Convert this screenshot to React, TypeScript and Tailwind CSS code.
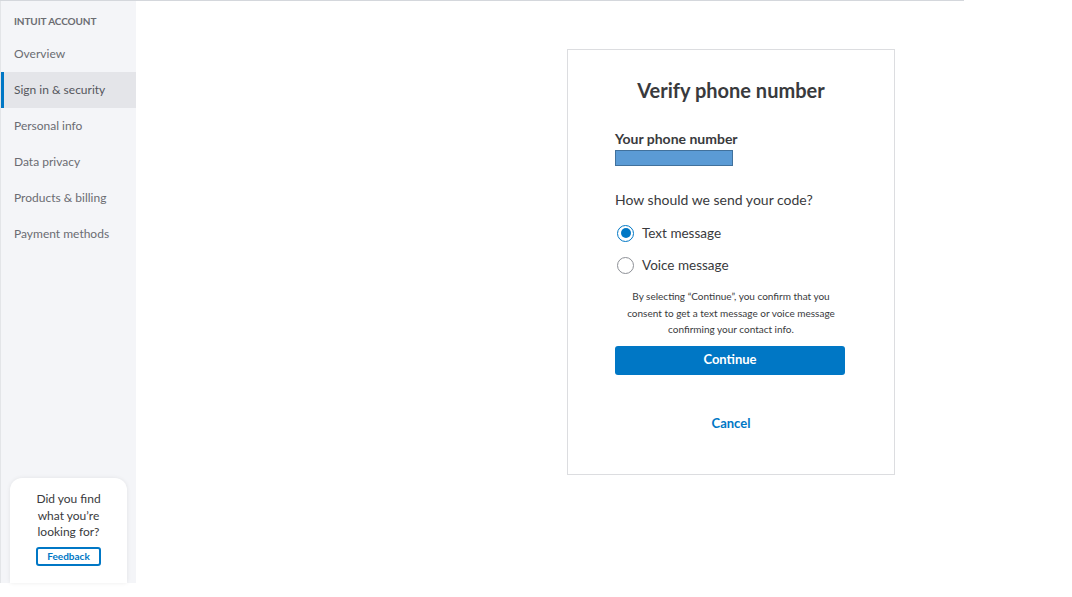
import React from "react";

const font = { fontFamily: "Lato, 'Open Sans', sans-serif" };

const items = ["Overview", "Sign in & security", "Personal info", "Data privacy", "Products & billing", "Payment methods"];

export default function App() {
  return (
    <div className="w-[1072px] h-[597px] bg-white" style={font}>
      <div className="w-[964px] border-t border-[#d4d7dc] flex">
        <aside className="w-[136px] h-[582px] bg-[#f4f5f8] border-l border-[#e3e5e8] flex flex-col shrink-0">
          <div className="pl-[13px] pt-[13px] h-[35px] text-[10px] font-bold text-[#6b6c72] tracking-[-0.1px]">INTUIT ACCOUNT</div>
          {items.map((it, i) => (
            <div
              key={it}
              className={
                i === 1
                  ? "h-[36px] flex items-center pl-[10px] text-[12px] text-[#55575d] bg-[#e4e5e9] border-l-[3px] border-[#0077c5]"
                  : "h-[36px] flex items-center pl-[13px] text-[12px] text-[#6b6c72]"
              }
            >
              {it}
            </div>
          ))}
          <div className="mt-auto mx-[9px] bg-white rounded-t-[12px] shadow-[0_0_4px_rgba(0,0,0,0.08)] h-[105px] flex flex-col items-center pt-[13px]">
            <div className="text-[12px] leading-[16.5px] text-[#393a3d] text-center">
              Did you find
              <br />
              what you’re
              <br />
              looking for?
            </div>
            <div className="mt-[6px] w-[65px] h-[19px] border-2 border-[#0077c5] rounded-[3px] flex items-center justify-center text-[10px] font-bold text-[#0077c5]">
              Feedback
            </div>
          </div>
        </aside>
        <main className="flex-1 pl-[431px] pt-[48px]">
          <div className="w-[328px] h-[426px] border border-[#dcdde0] flex flex-col px-[47px]">
            <h1 className="mt-[28px] text-center text-[20px] font-bold text-[#393a3d] leading-[24px]">Verify phone number</h1>
            <div className="mt-[29px] text-[14px] font-bold text-[#393a3d] leading-[16px]">Your phone number</div>
            <div className="mt-[3px] w-[118px] h-[16px] bg-[#5b9bd5] border border-[#41719c]" />
            <div className="mt-[25px] text-[14px] text-[#393a3d] leading-[18px]">How should we send your code?</div>
            <label className="mt-[15px] flex items-center h-[18px]">
              <span className="ml-[2px] w-[17px] h-[17px] rounded-full border-[1.5px] border-[#0077c5] flex items-center justify-center">
                <span className="w-[10px] h-[10px] rounded-full bg-[#0077c5]" />
              </span>
              <span className="ml-[8px] text-[13.5px] text-[#393a3d]">Text message</span>
            </label>
            <label className="mt-[14px] flex items-center h-[18px]">
              <span className="ml-[2px] w-[17px] h-[17px] rounded-full border border-[#8d9096]" />
              <span className="ml-[8px] text-[13.5px] text-[#393a3d]">Voice message</span>
            </label>
            <p className="mt-[14px] text-center text-[10px] leading-[16.5px] text-[#393a3d]">
              By selecting “Continue”, you confirm that you
              <br />
              consent to get a text message or voice message
              <br />
              confirming your contact info.
            </p>
            <button className="mt-[8px] w-[230px] h-[29px] bg-[#0077c5] rounded-[3px] text-white text-[13px] font-bold">Continue</button>
            <div className="mt-[39px] text-center text-[13px] font-bold text-[#0077c5]">Cancel</div>
          </div>
        </main>
      </div>
    </div>
  );
}
